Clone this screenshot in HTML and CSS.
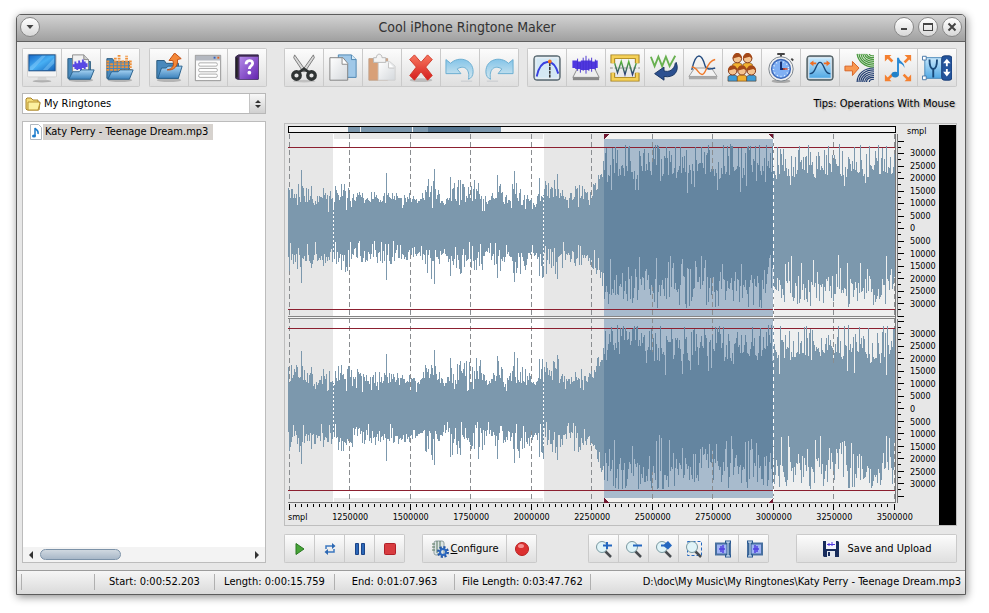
FILE: index.html
```html
<!DOCTYPE html>
<html lang="en">
<head>
<meta charset="utf-8">
<title>Cool iPhone Ringtone Maker</title>
<link rel="stylesheet" href="styles.css">
</head>
<body>
<svg class="sprite" aria-hidden="true">
  <defs>
    <linearGradient id="gBlue" x1="0" y1="0" x2="0" y2="1"><stop offset="0" stop-color="#a8d4f4"/><stop offset="1" stop-color="#3c82bc"/></linearGradient>
    <linearGradient id="gScreen" x1="0" y1="0" x2="1" y2="1"><stop offset="0" stop-color="#1668c8"/><stop offset=".5" stop-color="#48b0f4"/><stop offset="1" stop-color="#1260b8"/></linearGradient>
    <linearGradient id="gPurple" x1="0" y1="0" x2="1" y2="1"><stop offset="0" stop-color="#b48ae8"/><stop offset="1" stop-color="#6424b0"/></linearGradient>
    <linearGradient id="gRed" x1="0" y1="0" x2="0" y2="1"><stop offset="0" stop-color="#f87860"/><stop offset="1" stop-color="#d41c1c"/></linearGradient>
    <linearGradient id="gPaper" x1="0" y1="0" x2="1" y2="1"><stop offset="0" stop-color="#ffffff"/><stop offset="1" stop-color="#d4d8dc"/></linearGradient>
    <linearGradient id="gWave" x1="0" y1="0" x2="0" y2="1"><stop offset="0" stop-color="#58b838"/><stop offset="1" stop-color="#283878"/></linearGradient>
    <linearGradient id="gFlat" x1="0" y1="0" x2="0" y2="1"><stop offset="0" stop-color="#c8e8fc"/><stop offset="1" stop-color="#50a8e4"/></linearGradient>
    <linearGradient id="gSky" x1="0" y1="0" x2="0" y2="1"><stop offset="0" stop-color="#84c4e8"/><stop offset="1" stop-color="#d4e8f0"/></linearGradient>
  </defs>
  <symbol id="folder" viewBox="0 0 32 32">
    <ellipse cx="16" cy="29" rx="13" ry="2" fill="#b4b4b4"/>
    <path d="M3 8h8l2 3h13v16H3z" fill="#4888bc" stroke="#28587c"/>
    <path d="M8 16h5l2-2h15l-4 13H4z" fill="url(#gBlue)" stroke="#28608c"/>
  </symbol>
  <symbol id="monitor" viewBox="0 0 32 32">
    <ellipse cx="16" cy="30" rx="10" ry="1.500" fill="#b0b0b0"/>
    <path d="M12 24h8l1 5H11z" fill="#d4d4d4"/>
    <rect x=".5" y="1.500" width="31" height="24" rx="1" fill="#f4f4f4" stroke="#d0d0d0"/>
    <rect x="2" y="2" width="28" height="17" fill="url(#gScreen)" stroke="#184880"/>
    <path d="M3 15L16 3h4L6 18H3zM17 18L29 5v6l-7 7z" fill="#8cd0fc" opacity=".45"/>
  </symbol>
  <symbol id="open-wave" viewBox="0 0 32 32">
    <ellipse cx="16" cy="29" rx="13" ry="2" fill="#b4b4b4"/>
    <path d="M2 6h6l2 3h16v18H2z" fill="#4888bc" stroke="#28587c"/>
    <path d="M7 2h12l5 5v17H7z" fill="#f0f0f0" stroke="#888"/><path d="M19 2v5h5" fill="#ccc" stroke="#888"/>
    <path d="M8 12v3M10 9v8M12 11v7M14 8v9M16 10v9M18 7v9M20 9v8M22 11v4" stroke="#5848e4" stroke-width="2"/>
    <path d="M7 20h7l2-2h14l-4 10H3z" fill="url(#gBlue)" stroke="#28608c"/>
  </symbol>
  <symbol id="open-eq" viewBox="0 0 32 32">
    <ellipse cx="16" cy="29" rx="13" ry="2" fill="#b4b4b4"/>
    <path d="M2 6h6l2 3h16v18H2z" fill="#4888bc" stroke="#28587c"/>
    <path d="M3 19v-11M7 19V10M11 19V5M15 19V1M19 19V7M23 19V3M27 19V8" stroke="#f09038" stroke-width="3" stroke-dasharray="2 1"/>
    <path d="M7 20h7l2-2h14l-4 10H3z" fill="url(#gBlue)" stroke="#28608c"/>
  </symbol>
  <symbol id="export" viewBox="0 0 32 32">
    <use href="#folder"/>
    <path d="M14 18c6-1 8-5 6-10h-4l6-8 7 6-4 1c1 7-4 12-11 11z" fill="#f48838" stroke="#c04c10"/>
  </symbol>
  <symbol id="form" viewBox="0 0 32 32">
    <path d="M2.500 2.500h27v27h-27z" fill="#fafafa" stroke="#909090"/><path d="M3 3h26v5H3z" fill="#b4b8c0"/>
    <path d="M22 4h2v2h-2z" fill="#3060c0"/><path d="M26 4h2v2h-2z" fill="#e06020"/>
    <rect x="6" y="10.500" width="20" height="3.500" rx="1.500" fill="#fff" stroke="#aaa"/><rect x="6" y="16.500" width="20" height="3.500" rx="1.500" fill="#fff" stroke="#aaa"/><rect x="6" y="22.500" width="20" height="3.500" rx="1.500" fill="#fff" stroke="#aaa"/>
  </symbol>
  <symbol id="help" viewBox="0 0 32 32">
    <path d="M4 4l3-2h21v26H6l-2-1z" fill="#443058" stroke="#281840"/><path d="M8 4h20v24H8z" fill="url(#gPurple)"/><path d="M5 5v21" stroke="#222" stroke-width="2"/>
    <path d="M15 12c0-5 7-5 7-1 0 3-3.500 2.500-3.500 6" fill="none" stroke="#fff" stroke-width="3"/><circle cx="18.500" cy="21" r="2" fill="#fff"/>
  </symbol>
  <symbol id="cut" viewBox="0 0 32 32">
    <ellipse cx="16" cy="30" rx="12" ry="1.500" fill="#c0c0c0"/>
    <path d="M6 2l12 17-3 1L5 5zM26 2L14 19l3 1L27 5z" fill="#d8d8d8" stroke="#787878"/>
    <ellipse cx="8" cy="24" rx="4" ry="4" fill="none" stroke="#303434" stroke-width="3.500"/><ellipse cx="24" cy="24" rx="4" ry="4" fill="none" stroke="#303434" stroke-width="3.500"/>
    <path d="M10 21l6-4 6 4" fill="none" stroke="#303434" stroke-width="3"/>
  </symbol>
  <symbol id="copy" viewBox="0 0 32 32">
    <path d="M11 2h14l5 5v19H11z" fill="#a0c8e8" stroke="#4c84b0"/><path d="M25 2v5h5" fill="#d8ecf8" stroke="#4c84b0"/>
    <path d="M2 5h14l5 6v18H2z" fill="url(#gPaper)" stroke="#808080"/><path d="M15 5v7h6" fill="#fff" stroke="#888"/>
  </symbol>
  <symbol id="paste" viewBox="0 0 32 32">
    <path d="M2 6h20v23H2z" fill="#d8a078" stroke="#c0a088"/><path d="M12 9h12l6 5v15H12z" fill="url(#gPaper)" stroke="#d0d0d0"/><path d="M23 10v6h6" fill="#fff" stroke="#c0c0c0"/>
    <path d="M7 10V5h3c0-5 6-5 6 0h4v5z" fill="#f4f4f4" stroke="#b8b8b8"/>
  </symbol>
  <symbol id="delete" viewBox="0 0 32 32">
    <ellipse cx="16" cy="29" rx="12" ry="2" fill="#bcbcbc"/>
    <path d="M4 7l5-5 7 8 7-8 5 5-7 8 7 9-5 5-7-9-7 9-5-5 7-9z" fill="url(#gRed)" stroke="#d03828"/>
  </symbol>
  <symbol id="undo" viewBox="0 0 32 32">
    <path d="M1 7l5 4C14 3 30 6 30 20c0 4-2 7-5 8 2-10-4-16-12-11l4 5H1z" fill="url(#gSky)" stroke="#68acd0"/><path d="M17 30h12" stroke="#c4c8cc"/>
  </symbol>
  <symbol id="fade" viewBox="0 0 32 32">
    <rect x="2" y="3" width="28" height="26" rx="3" fill="#90a0a8" stroke="#485860"/><rect x="4" y="5" width="24" height="22" fill="#d4e8f4" stroke="#f8fcff"/>
    <path d="M5 25C9 6 23 4 28 22" fill="none" stroke="#3840e0" stroke-width="2"/><path d="M19 11v15" stroke="#222" stroke-width="1.500" stroke-dasharray="3 1"/><circle cx="19" cy="9" r="2" fill="#f47020"/>
  </symbol>
  <symbol id="noise" viewBox="0 0 32 32">
    <path d="M7 16h18l5 10H2z" fill="#eee" stroke="#888"/><path d="M2 26h28v3H2z" fill="#888"/>
    <path d="M3 8v8M6 8v9M9 9v8M12 8v10M15 8v10M18 8v10M21 8v9M24 9v8M27 8v8" stroke="#5038e0" stroke-width="3"/><path d="M7 6v13M10 10v11M13 5v14M16 3v19M19 6v13M22 5v15M26 7v11" stroke="#4430d0"/>
  </symbol>
  <symbol id="normalize" viewBox="0 0 32 32">
    <path d="M3 11V4h26v7M3 21v7h26v-7" fill="none" stroke="#a07c18" stroke-width="5"/><path d="M3 11V4h26v7M3 21v7h26v-7" fill="none" stroke="#f4d058" stroke-width="3"/>
    <path d="M0 16h32" stroke="#888" stroke-dasharray="3 2"/><path d="M5 11l3 10 4-12 4 14 4-14 4 14 4-12" fill="none" stroke="url(#gWave)" stroke-width="1.500"/>
  </symbol>
  <symbol id="reverse" viewBox="0 0 32 32">
    <path d="M2 4l4 10 4-10 4 10 4-10 4 10 6-11" fill="none" stroke="#68b050" stroke-width="2"/>
    <path d="M29 10c4 10-3 17-13 15v4L6 22l10-7v4c5 2 11-1 12-8z" fill="#2c5090" stroke="#183460"/>
  </symbol>
  <symbol id="invert" viewBox="0 0 32 32">
    <path d="M7 16h18l6 9H1z" fill="#f2f2f2" stroke="#999"/><path d="M1 25h30v3H1z" fill="#aaa"/>
    <path d="M4 18C9-4 15 2 18 13c2 6 7 4 11 3" fill="none" stroke="#244c80" stroke-width="1.500"/><path d="M4 15c6 0 7 8 11 8 5 0 4-14 14-16" fill="none" stroke="#f07828" stroke-width="1.500"/>
  </symbol>
  <symbol id="head" viewBox="0 0 12 18">
    <path d="M1 17v-5q5-4 10 0v5z" fill="currentColor" stroke="#5c3414" stroke-width=".6"/><circle cx="6" cy="6" r="4.500" fill="#f4c490" stroke="#7c3010"/><path d="M1 6c0-8 10-8 10 0l-3-2-4 1z" fill="#a44818"/>
  </symbol>
  <symbol id="people" viewBox="0 0 32 32">
    <use class="gold" href="#head" x="5" y="0" width="12" height="18"/><use class="gold" href="#head" x="16" y="0" width="12" height="18"/>
    <use class="sky" href="#head" x="0" y="13" width="12" height="18"/><use class="gold" href="#head" x="10" y="13" width="12" height="18"/><use class="sky" href="#head" x="20" y="13" width="12" height="18"/>
  </symbol>
  <symbol id="timer" viewBox="0 0 32 32">
    <ellipse cx="16" cy="30" rx="10" ry="2" fill="#aaa"/><path d="M12 1h8M16 1v4M27 6l2 2" stroke="#444" stroke-width="2"/>
    <circle cx="16" cy="17" r="13" fill="#f0f0f0" stroke="#788088"/><circle cx="16" cy="17" r="10" fill="#80b0f4" stroke="#3c68b8" stroke-width="1.500"/>
    <circle cx="16" cy="17" r="8" fill="none" stroke="#e8f4ff" stroke-width="1.500" stroke-dasharray="1 3"/><path d="M16 9v8h4" fill="none" stroke="#102c70" stroke-width="2"/><path d="M18 17h5" stroke="#e84c20" stroke-width="1.500"/>
  </symbol>
  <symbol id="bell" viewBox="0 0 32 32">
    <rect x="2" y="3" width="28" height="26" rx="3" fill="#748088" stroke="#48585c"/><rect x="4" y="5" width="24" height="22" fill="url(#gFlat)" stroke="#e8f4fc"/>
    <path d="M5 22c7 1 6-12 11-12s4 13 11 12" fill="none" stroke="#184878" stroke-width="1.500"/><path d="M5 11l4-3v2h3v2H9v2zM27 11l-4-3v2h-3v2h3v2z" fill="#f06c20"/>
  </symbol>
  <symbol id="speed" viewBox="0 0 32 32">
    <g fill="none" stroke="#48983c" stroke-width="1.300"><path d="M14 1c1 8 8 14 18 14M16 1c1 7 7 12 16 12M18 1c1 6 6 10 14 10M20 1c1 5 5 8 12 8M22 1c1 4 4 6 10 6M24 1c1 3 3 4 8 4M27 1c0 1 2 2 5 2"/></g>
    <g fill="none" stroke="#203c70" stroke-width="1.300"><path d="M14 31c0-9 8-15 18-15M16 31c0-8 7-13 16-13M18 31c0-6 6-11 14-11M20 31c0-5 5-9 12-9M22 31c0-4 4-7 10-7M24 31c0-3 3-5 8-5M27 31c0-2 2-3 5-3"/></g>
    <path d="M1 14h8V9l7 7-7 8v-5H1z" fill="#f89850" stroke="#d86020"/>
  </symbol>
  <symbol id="stretch" viewBox="0 0 32 32">
    <path d="M2 9V2h7l-2 2 4 4-2 2-4-4zM23 2h7v7l-2-2-4 4-2-2 4-4zM2 23v7h7l-2-2 4-4-2-2-4 4zM30 23v7h-7l2-2-4-4 2-2 4 4z" fill="#f48030"/>
    <ellipse cx="13" cy="23" rx="4" ry="3" fill="#2080c8"/><path d="M15 23V5h2c1 5 6 4 6 11-2-4-4-5-6-5v12z" fill="#2888d4"/>
  </symbol>
  <symbol id="pitch" viewBox="0 0 32 32">
    <rect x="3" y="5" width="22" height="22" fill="url(#gFlat)" stroke="#4888b8"/>
    <path d="M8 7c0 9 2 10 4 10s4-1 4-10M12 17v9" fill="none" stroke="#184878" stroke-width="2"/><path d="M.500 3.500h4v4h-4zM.500 24.500h4v4h-4z" fill="#fff" stroke="#4878a8"/>
    <rect x="21" y="3" width="11" height="26" rx="3" fill="#24549c" stroke="#183c74"/><path d="M26.500 6l4 5h-3v3h-2v-3h-3zM26.500 25l4-5h-3v-3h-2v3h-3z" fill="#fff"/>
  </symbol>
  <symbol id="lens" viewBox="0 0 18 18">
    <path d="M10 11l6 6" stroke="#484c50" stroke-width="2.500"/><circle cx="7" cy="7" r="5.500" fill="#e0f4f8" stroke="#7898a0"/>
  </symbol>
  <symbol id="zoom-in" viewBox="0 0 18 18"><use href="#lens"/><path d="M12 2v7M8 5.500h9" stroke="#2468c0" stroke-width="2"/></symbol>
  <symbol id="zoom-out" viewBox="0 0 18 18"><use href="#lens"/><path d="M8 5.500h9" stroke="#2468c0" stroke-width="2"/></symbol>
  <symbol id="zoom-fit" viewBox="0 0 18 18"><use href="#lens"/><path d="M6 4.500h3L13 1l4 4.500-4 4-4-3H6z" fill="#2468c0"/></symbol>
  <symbol id="zoom-sel" viewBox="0 0 18 18"><path d="M2.500 1.500h14v14h-14z" fill="none" stroke="#2468c0" stroke-dasharray="3 2"/><use href="#lens"/></symbol>
  <symbol id="zoom-left" viewBox="0 0 18 18"><path d="M1 3.500h14v11H1z" fill="#a0b4f4" stroke="#4870a0" stroke-width="2"/><path d="M4 9h6M6 6v6M8 5v8" stroke="#5040e0" stroke-width="1.500"/><path d="M10 2h6M10 16h6M13 2v14" stroke="#285890" stroke-width="3"/><path d="M11 2h4M11 16h4M13 2v14" stroke="#e8f4ff"/></symbol>
  <symbol id="note" viewBox="0 0 14 16"><path d="M1.500.500h8l3 3v12h-11z" fill="#fff" stroke="#b0b8c0"/><path d="M6 12V4c1 2 4 2 3 6" fill="none" stroke="#1c7ccc" stroke-width="1.500"/><ellipse cx="5" cy="12" rx="2" ry="1.500" fill="#1c7ccc"/></symbol>
  <symbol id="yfolder" viewBox="0 0 16 14"><path d="M1 12V2l1-1h4l2 2h5v2h2l-1 8H2z" fill="#f4dc78" stroke="#a8842c"/><path d="M3 5h11l1 1-2 7H3z" fill="#fcf0a0" stroke="#b89434"/></symbol>
  <symbol id="gear" viewBox="0 0 18 18"><rect x="3" y="1" width="10" height="14" rx="2" fill="#dce4e4" stroke="#90a0a0"/><path d="M1 4h3M1 7h3M1 10h3M6 1v12M9 1v8" stroke="#587860"/><circle cx="12" cy="12" r="4.500" fill="none" stroke="#2458a8" stroke-width="3" stroke-dasharray="2 1.500"/><circle cx="12" cy="12" r="3" fill="none" stroke="#2c68c0" stroke-width="2"/></symbol>
  <symbol id="disk" viewBox="0 0 18 18"><path d="M1 1h15l1 1v15H2l-1-1z" fill="#182c5c"/><path d="M4 1h10v8H4z" fill="#f4f4fc"/><path d="M5 4.500h8M7 3v3M10 2v4" stroke="#5038e0"/><path d="M5 11h8v6H5z" fill="#e4e8f0"/><path d="M6 12h2v4H6z" fill="#182c5c"/></symbol>
</svg>

<main class="window">
  <header class="titlebar">
    <button class="round" aria-label="Menu"><svg viewBox="0 0 18 18"><path d="M5.500 7h7L9 11z"/></svg></button>
    <h1>Cool iPhone Ringtone Maker</h1>
    <button class="round" aria-label="Minimize"><svg viewBox="0 0 18 18"><path d="M6 10h6v2H6z"/></svg></button>
    <button class="round" aria-label="Maximize"><svg viewBox="0 0 18 18"><path d="M4 5h10v8H4zM5 7v5h8V7z" fill-rule="evenodd"/></svg></button>
    <button class="round" aria-label="Close"><svg viewBox="0 0 18 18"><path d="M5.500 5.500l7 7M12.500 5.500l-7 7" class="x"/></svg></button>
  </header>

  <nav class="toolbar" aria-label="Tools">
    <div class="group">
      <button aria-label="Desktop"><svg><use href="#monitor"/></svg></button>
      <button aria-label="Open audio"><svg><use href="#open-wave"/></svg></button>
      <button aria-label="Open library"><svg><use href="#open-eq"/></svg></button>
    </div>
    <div class="group">
      <button aria-label="Export"><svg><use href="#export"/></svg></button>
      <button aria-label="Properties"><svg><use href="#form"/></svg></button>
      <button aria-label="Help"><svg><use href="#help"/></svg></button>
    </div>
    <span class="divider"></span>
    <div class="group">
      <button aria-label="Cut"><svg><use href="#cut"/></svg></button>
      <button aria-label="Copy"><svg><use href="#copy"/></svg></button>
      <button aria-label="Paste"><svg><use href="#paste"/></svg></button>
      <button aria-label="Delete"><svg><use href="#delete"/></svg></button>
      <button aria-label="Undo"><svg><use href="#undo"/></svg></button>
      <button aria-label="Redo"><svg class="flip"><use href="#undo"/></svg></button>
    </div>
    <div class="group">
      <button aria-label="Fade"><svg><use href="#fade"/></svg></button>
      <button aria-label="Noise"><svg><use href="#noise"/></svg></button>
      <button aria-label="Normalize"><svg><use href="#normalize"/></svg></button>
      <button aria-label="Reverse"><svg><use href="#reverse"/></svg></button>
      <button aria-label="Invert"><svg><use href="#invert"/></svg></button>
      <button aria-label="Chorus"><svg><use href="#people"/></svg></button>
      <button aria-label="Delay"><svg><use href="#timer"/></svg></button>
      <button aria-label="Filter"><svg><use href="#bell"/></svg></button>
      <button aria-label="Speed"><svg><use href="#speed"/></svg></button>
      <button aria-label="Stretch"><svg><use href="#stretch"/></svg></button>
      <button aria-label="Pitch"><svg><use href="#pitch"/></svg></button>
    </div>
  </nav>

  <div class="workspace">
    <aside class="files">
      <div class="combo">
        <svg class="combo-icon"><use href="#yfolder"/></svg>
        <select aria-label="Folder"><option>My Ringtones</option></select>
        <span class="spin"><svg viewBox="0 0 8 10"><path d="M1 4l3-3 3 3zM1 6l3 3 3-3z"/></svg></span>
      </div>
      <div class="list">
        <ul><li><svg><use href="#note"/></svg><span>Katy Perry - Teenage Dream.mp3</span></li></ul>
        <div class="scroll">
          <svg viewBox="0 0 4 8"><path d="M4 0v8L0 4z"/></svg>
          <div class="track"><div class="thumb"></div></div>
          <svg viewBox="0 0 4 8"><path d="M0 0v8l4-4z"/></svg>
        </div>
      </div>
    </aside>

    <section class="editor">
      <p class="tips">Tips: Operations With Mouse</p>
      <div class="panel">
        <div class="plot">
          <div class="overview"><i class="a"></i><i class="b"></i><i class="c"></i><i class="d"></i><i class="e"></i></div>
          <svg class="wave" id="wave" viewBox="0 0 608 369" preserveAspectRatio="none" role="img" aria-label="Stereo waveform"></svg>
          <svg class="xticks" id="xticks" viewBox="0 0 608 7" preserveAspectRatio="none"></svg>
          <div class="xlabels"><span class="unit">smpl</span><span>1250000</span><span>1500000</span><span>1750000</span><span>2000000</span><span>2250000</span><span>2500000</span><span>2750000</span><span>3000000</span><span>3250000</span><span>3500000</span></div>
        </div>
        <div class="ruler">
          <svg class="yticks" id="yticks" viewBox="0 0 9 369" preserveAspectRatio="none"></svg>
          <div class="scale">
            <span class="unit">smpl</span>
            <ol><li>30000</li><li>25000</li><li>20000</li><li>15000</li><li>10000</li><li>5000</li><li>0</li><li>5000</li><li>10000</li><li>15000</li><li>20000</li><li>25000</li><li>30000</li></ol>
            <ol><li>30000</li><li>25000</li><li>20000</li><li>15000</li><li>10000</li><li>5000</li><li>0</li><li>5000</li><li>10000</li><li>15000</li><li>20000</li><li>25000</li><li>30000</li></ol>
          </div>
        </div>
        <div class="meter"></div>
      </div>
      <div class="controls">
        <div class="group small">
          <button aria-label="Play"><svg viewBox="0 0 18 18"><path d="M5 3.500l8 5.500-8 5.500z" fill="#48a438" stroke="#287820"/></svg></button>
          <button aria-label="Loop"><svg viewBox="0 0 18 18"><path d="M5 9V6h7M13 9v3H6" fill="none" stroke="#3c78c0" stroke-width="1.500"/><path d="M11 3l3.500 3L11 9zM7 9l-3.500 3L7 15z" fill="#2c68b4"/></svg></button>
          <button aria-label="Pause"><svg viewBox="0 0 18 18"><path d="M4.500 3.500h3v11h-3zM10.500 3.500h3v11h-3z" fill="#2c68b8" stroke="#1c4488"/></svg></button>
          <button aria-label="Stop"><svg viewBox="0 0 18 18"><rect x="3.500" y="3.500" width="11" height="11" rx="1" fill="#d83c40" stroke="#b02028"/></svg></button>
        </div>
        <div class="group small">
          <button class="labelled"><svg><use href="#gear"/></svg><span><u>C</u>onfigure</span></button>
          <button aria-label="Record"><svg viewBox="0 0 18 18"><circle cx="9" cy="9" r="6.500" fill="#dc3030" stroke="#b82020"/><ellipse cx="8" cy="6" rx="3" ry="2" fill="#f49090"/></svg></button>
        </div>
        <div class="group small right">
          <button aria-label="Zoom in"><svg><use href="#zoom-in"/></svg></button>
          <button aria-label="Zoom out"><svg><use href="#zoom-out"/></svg></button>
          <button aria-label="Zoom full"><svg><use href="#zoom-fit"/></svg></button>
          <button aria-label="Zoom selection"><svg><use href="#zoom-sel"/></svg></button>
          <button aria-label="Zoom to end"><svg><use href="#zoom-left"/></svg></button>
          <button aria-label="Zoom to start"><svg class="flip"><use href="#zoom-left"/></svg></button>
        </div>
        <div class="group small save"><button class="labelled"><svg><use href="#disk"/></svg><span>Save and Upload</span></button></div>
      </div>
    </section>
  </div>

  <footer class="status">
    <span class="blank"></span><span>Start: 0:00:52.203</span><span>Length: 0:00:15.759</span><span>End: 0:01:07.963</span><span class="wide">File Length: 0:03:47.762</span><span class="path">D:\doc\My Music\My Ringtones\Katy Perry - Teenage Dream.mp3</span>
  </footer>
</main>
<script src="wave.js"></script>
</body>
</html>
```
FILE: styles.css
```css
* { box-sizing: border-box; }
body {
  margin: 0;
  min-height: 100vh;
  padding: 14px 23px 19px 16px;
  display: flex;
  background: #fff;
  color: #000;
  font: 11px/16px "DejaVu Sans Condensed", "DejaVu Sans", sans-serif;
}
h1, p, ul, ol { margin: 0; padding: 0; list-style: none; }
button { margin: 0; padding: 0; font: inherit; color: inherit; }
.sprite { position: absolute; width: 0; height: 0; }
.gold { color: #f0b030; }
.sky { color: #3c9cd8; }
.flip { transform: scaleX(-1); }

.window {
  flex: 1;
  min-width: 0;
  display: flex;
  flex-direction: column;
  border: 1px solid #5c5c5c;
  border-radius: 5px 5px 0 0;
  background: #e7e7e7;
  box-shadow: 1px 2px 9px rgba(0, 0, 0, .45);
}
.titlebar {
  height: 27px;
  padding: 0 3px 2px;
  display: flex;
  align-items: center;
  gap: 4px;
  border-bottom: 1px solid #606060;
  border-radius: 4px 4px 0 0;
  background: linear-gradient(#d2d2d2, #a0a0a0);
}
.titlebar h1 {
  flex: 1;
  text-align: center;
  font-size: 14px;
  font-weight: normal;
  color: #333;
}
.round {
  width: 20px;
  height: 20px;
  border: 1px solid #888;
  border-radius: 50%;
  background: linear-gradient(#fff, #d8d8d8);
}
.round svg { display: block; width: 18px; height: 18px; fill: #444; }
.round .x { stroke: #444; stroke-width: 2; }

.toolbar { display: flex; padding: 6px 8px 6px 5px; }
.group {
  display: flex;
  height: 39px;
  border: 1px solid #cacaca;
  border-right: 0;
  border-radius: 2px;
}
.group button {
  width: 39px;
  display: flex;
  align-items: center;
  justify-content: center;
  border: 0;
  border-right: 1px solid #cacaca;
  background: linear-gradient(#fcfcfc, #dfdfdf);
}
.group svg { width: 30px; height: 30px; }
.toolbar .group + .group { margin-left: 9px; }
.divider { width: 1px; margin: 0 7px 0 10px; background: linear-gradient(#e7e7e7, #b8b8b8, #e7e7e7); }
.toolbar .divider + .group + .group { margin-left: 8px; }

.workspace {
  flex: 1;
  min-height: 0;
  display: grid;
  grid-template-columns: 244px 1fr;
  gap: 18px;
  padding: 0 8px 7px 5px;
}
.files { display: flex; flex-direction: column; gap: 7px; }
.combo {
  height: 21px;
  display: flex;
  align-items: center;
  border: 1px solid #b8b8b8;
  background: #fff;
}
.combo-icon { width: 16px; height: 14px; margin-left: 2px; }
.combo select {
  flex: 1;
  height: 19px;
  padding: 0 3px;
  border: 0;
  appearance: none;
  background: transparent;
  color: #000;
  font: inherit;
}
.spin {
  width: 16px;
  height: 19px;
  display: grid;
  place-items: center;
  border-left: 1px solid #c4c4c4;
  background: linear-gradient(#f8f8f8, #d0d0d0);
}
.spin svg { width: 8px; height: 10px; fill: #333; }
.list {
  flex: 1;
  display: flex;
  flex-direction: column;
  border: 1px solid #bcbcbc;
  background: #fff;
}
.list ul { flex: 1; padding: 2px 6px; }
.list li { display: flex; align-items: center; }
.list li svg { width: 14px; height: 16px; }
.list li span { padding: 0 5px 0 2px; background: #d6d2ce; }
.scroll {
  height: 15px;
  display: flex;
  align-items: center;
  gap: 7px;
  padding: 0 6px;
  background: #f3f3f3;
}
.scroll svg { width: 4px; height: 8px; fill: #333; }
.track { flex: 1; }
.thumb {
  width: 39%;
  height: 11px;
  border: 1px solid #7c92a8;
  border-radius: 6px;
  background: linear-gradient(#d0d8e0, #a8b8c8);
}

.editor { display: flex; flex-direction: column; min-width: 0; }
.tips {
  height: 30px;
  padding: 3px 2px 0 0;
  text-align: right;
  text-shadow: 1px 1px 2px #999;
}
.panel {
  flex: 1;
  display: flex;
  padding: 1px 0 0 3px;
  border: 1px solid #bebebe;
}
.plot { flex: 1; min-width: 0; display: flex; flex-direction: column; }
.overview {
  height: 7px;
  margin: 1px 0;
  display: flex;
  border: 1px solid #000;
  background: #f2f2f2;
}
.overview i { background: #7b97ad; }
.overview .a { width: 2%; margin-left: 9.700%; }
.overview .b { width: 8.400%; margin-left: 1px; }
.overview .c { width: 2.500%; margin-left: 1px; }
.overview .d { width: 7%; background: #557590; }
.overview .e { width: 5%; }
.wave { flex: 1; min-height: 0; width: 100%; display: block; }
.wave, .xticks, .yticks { shape-rendering: crispEdges; }
.xticks { width: 100%; height: 7px; margin-top: 1px; }
.xlabels {
  height: 14px;
  display: flex;
  margin-right: -5%;
  font-size: 9px;
  line-height: 12px;
  text-align: center;
}
.xlabels span { width: 9.480%; flex: none; }
.xlabels .unit { width: 5%; text-align: left; }
.ruler { width: 43px; display: flex; font-size: 9px; }
.yticks { width: 9px; margin: 9px 0 22px; }
.scale { flex: 1; display: flex; flex-direction: column; padding-bottom: 34px; }
.scale .unit { line-height: 12px; padding-left: 2px; }
.scale ol {
  flex: 1;
  margin-top: 10px;
  padding-left: 5px;
  display: flex;
  flex-direction: column;
}
.scale ol + ol { margin-top: 17px; }
.scale li { flex: 1; line-height: 12px; }
.meter { width: 17px; background: #000; }

.controls { display: flex; padding-top: 8px; }
.small { height: 29px; margin-right: 17px; }
.small button { width: 30px; }
.small svg { width: 18px; height: 18px; }
.small .labelled { width: 84px; gap: 2px; }
.right { margin-left: auto; margin-right: 27px; }
.save { margin-right: 0; }
.save .labelled { width: 160px; gap: 8px; }

.status {
  height: 24px;
  display: flex;
  align-items: center;
  padding: 0 4px 2px;
  border-top: 1px solid #9c9c9c;
  background: linear-gradient(#f6f6f6, #dadada);
}
.status span { width: 120px; text-align: center; border-left: 1px solid #b0b0b0; white-space: nowrap; }
.status .blank { width: 73px; height: 16px; }
.status .wide { width: 136px; }
.status .path { flex: 1; text-align: right; }
```
FILE: wave.js
```js
// Draws the stereo waveform, its selection and the rulers in sample units.
(function () {
  var W = 608, svg = [];
  function rect(x, y, w, h, fill) {
    svg.push('<rect x="' + x + '" y="' + y + '" width="' + w + '" height="' + h + '" fill="' + fill + '"/>');
  }
  // A vertical dashed rule, one column wide.
  function dashes(x, y1, y2, on, off, color) {
    var d = '';
    for (var y = y1; y < y2; y += on + off) d += 'M' + x + ' ' + y + 'h1v' + Math.min(on, y2 - y) + 'h-1z';
    svg.push('<path d="' + d + '" fill="' + color + '"/>');
  }
  var seed = 1;
  function rnd() {
    seed = (seed * 16807) % 2147483647;
    return seed / 2147483647;
  }
  // Peak envelope as [x, height] knots.
  var knots = [[0, 46], [14, 44], [30, 34], [55, 46], [75, 37], [95, 37], [120, 36], [131, 27], [138, 48], [146, 54],
    [156, 24], [165, 50], [178, 48], [192, 52], [199, 26], [210, 48], [220, 30], [227, 54], [240, 40], [247, 26],
    [254, 52], [262, 46], [270, 52], [279, 28], [289, 52], [300, 34], [306, 50], [312, 62], [317, 82], [607, 80]];
  function envelope(x) {
    for (var i = 1; i < knots.length; i++) {
      if (x <= knots[i][0]) {
        var a = knots[i - 1], b = knots[i];
        return a[1] + (b[1] - a[1]) * (x - a[0]) / (b[0] - a[0]);
      }
    }
    return 80;
  }
  var spikes = { 13: 58, 23: 42, 35: 40, 53: 44, 98: 55, 146: 59, 162: 51, 172: 48, 209: 53, 226: 57, 251: 50, 269: 54 };
  // Filled silhouette of the columns from x0 to x1.
  function silhouette(cols, x0, x1, fill) {
    var d = 'M' + x0 + ' ' + cols[x0][0];
    for (var x = x0; x < x1; x++) d += 'V' + cols[x][0] + 'H' + (x + 1);
    for (x = x1 - 1; x >= x0; x--) d += 'V' + cols[x][1] + 'H' + x;
    svg.push('<path d="' + d + 'z" fill="' + fill + '"/>');
  }
  function channel(center) {
    var cols = [];
    for (var x = 0; x < W; x++) {
      var e = envelope(x), quiet = x < 316;
      // Slow swell keeps the body of the wave from looking level.
      var swell = Math.sin(x / 5) + Math.sin(x / 11 + 2) + Math.sin(x / 2.7);
      var base = quiet ? Math.min(25, e - 3) : 52;
      if (x > 302 && quiet) base = 25 + (x - 302) * 1.8;
      var top = base + swell * (quiet ? 1 : 2) + (rnd() - .3) * (quiet ? 4 : 9);
      var bottom = base - (quiet ? 3 : 5) - swell * (quiet ? 1.5 : 3) + (rnd() - .4) * (quiet ? 7 : 16);
      var up = top + Math.max(0, e - top) * Math.pow(rnd(), quiet ? 1.2 : 2);
      var down = bottom + Math.max(0, e - 1 - bottom) * Math.pow(rnd(), quiet ? 1.2 : 1.5);
      if (rnd() < .07) up = base * (.65 + .3 * rnd());
      if (rnd() < .12) down = base * (.5 + .3 * rnd());
      if (!quiet && rnd() < .1) up = 81 + 3 * rnd();
      if (spikes[x]) { up = spikes[x]; down = spikes[x] * .95; }
      cols.push([Math.round(center - up), Math.round(center + Math.min(81, down))]);
    }
    silhouette(cols, 0, 316, '#7c98ad');
    silhouette(cols, 316, 485, '#6485a0');
    silhouette(cols, 485, W, '#7c98ad');
  }

  rect(0, 0, W, 369, '#e7e7e7');
  rect(45, 0, 211, 369, '#ffffff');
  rect(46, 0, 209, 5, '#e9e9e9');
  rect(46, 364, 209, 5, '#ebebeb');
  rect(485, 0, 123, 369, '#eeefef');
  rect(316, 0, 169, 369, '#f3f2f0');
  rect(316, 5, 169, 359, '#a8bbcd');
  for (var k = 0; k <= 10; k++) dashes(Math.round(k * 60.45) + 1, 0, 369, 5, 3, '#8a8d90');
  [13, 175, 194, 356].forEach(function (y) { rect(0, y, W, 1, '#8c2030'); });
  channel(94);
  channel(275);
  rect(0, 182, W, 3, '#f4f4f4');
  rect(0, 182, W, 1, '#858585');
  rect(0, 184, W, 1, '#858585');
  rect(0, 368, W, 1, '#777777');
  rect(607, 0, 1, 369, '#777777');
  [45, 255].forEach(function (x) {
    dashes(x, 54, 132, 2, 2, '#ffffff');
    dashes(x, 234, 314, 2, 2, '#ffffff');
  });
  dashes(485, 5, 364, 4, 3, '#ffffff');
  svg.push('<path d="M316 0h5l-5 5zM485 0h-5l5 5zM316 369h5l-5-5zM485 369h-5l5-5z" fill="#701830"/>');
  document.getElementById('wave').innerHTML = svg.join('');

  var ticks = '';
  for (var i = 0; i <= 100; i++) {
    var tx = Math.round(i * 6.045) + 1.5;
    ticks += 'M' + tx + ' 0V' + (i % 10 ? 3 : 6);
  }
  document.getElementById('xticks').innerHTML = '<path d="' + ticks + '" stroke="#000"/>';

  var lines = 'M1.5 0V183M1.5 185V369', marks = '';
  [94, 274].forEach(function (c) {
    for (var j = -14; j <= 14; j++) {
      var ty = Math.round(c + j * 6.25) + .5;
      marks += 'M2 ' + ty + 'H' + (j % 2 ? 5 : 8);
    }
  });
  document.getElementById('yticks').innerHTML = '<path d="' + lines + '" stroke="#777"/><path d="' + marks + '" stroke="#000"/>';
})();
```
